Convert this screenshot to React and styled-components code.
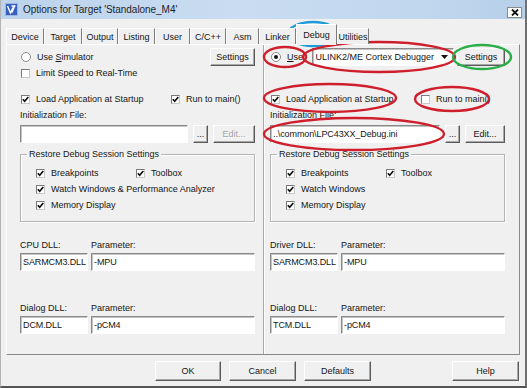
import React from 'react';
import styled, { createGlobalStyle } from 'styled-components';

const GlobalStyle = createGlobalStyle`
  html, body { margin:0; padding:0; background:#fff; }
  body { font-family:"Liberation Sans", Arial, sans-serif; font-size:9px; color:#151515; }
  * { box-sizing:border-box; }
`;

const Window = styled.div`
position:relative;
width:527px;
height:388px;
background:#f0f0f0;
border-left:1px solid #b4b4b4;
border-right:2px solid #707070;
border-bottom:2px solid #555;
display:flex;
flex-direction:column;
overflow:hidden;
`;

const TitleBar = styled.div`
height:19px;
flex:none;
display:flex;
align-items:center;
padding:0 3px 0 4px;
background:linear-gradient(to right,#bcd3ec,#c9dcf1 45%,#c1d7ee 80%,#b7cfe9);
`;

const TitleText = styled.span`
margin-left:5px;
font-size:10px;
letter-spacing:-0.05px;
color:#1b1f2a;
`;

const CloseBox = styled.div`
margin-left:auto;
margin-top:5px;
width:15px;
height:11px;
background:#fff;
border:1px solid #8a8a8a;
display:flex;
align-items:center;
justify-content:center;
`;

const TabStrip = styled.div`
display:flex;
align-items:flex-end;
height:20px;
margin-top:5px;
padding-left:5px;
position:relative;
z-index:1;
`;

const Tab = styled.div`
width:${p => p.$w}px;
height:${p => (p.$active ? 21 : 16)}px;
margin-bottom:${p => (p.$active ? -1 : 0)}px;
display:flex;
align-items:center;
justify-content:center;
white-space:nowrap;
background:#f0f0f0;
border-top:1px solid #fff;
border-left:1px solid #fff;
border-right:1px solid #7c7c7c;
`;

const Panel = styled.div`
margin:0 5px;
height:311px;
flex:none;
border:1px solid;
border-color:#fff #8a8a8a #8a8a8a #fff;
display:grid;
grid-template-columns:256px 2px 1fr;
`;

const Divider = styled.div`
border-left:1px solid #a8a8a8;
border-right:1px solid #fff;
`;

const Column = styled.div`
display:flex;
flex-direction:column;
padding:2px ${p => (p.$right ? 14 : 8)}px 0 ${p => (p.$right ? 5 : 13)}px;
`;

const Row = styled.div`
display:flex;
align-items:center;
height:${p => p.$h || 14}px;
margin-top:${p => p.$mt || 0}px;
gap:${p => p.$gap || 0}px;
white-space:nowrap;
`;

const SplitRow = styled.div`
display:grid;
grid-template-columns:${p => p.$first}px 1fr;
align-items:center;
height:${p => p.$h || 14}px;
margin-top:${p => p.$mt || 0}px;
column-gap:${p => p.$gap || 0}px;
white-space:nowrap;
`;

const Option = styled.label`
display:flex;
align-items:center;
gap:6px;
margin-left:1px;
`;

const Box = styled.span`
width:9px;
height:9px;
flex:none;
background:#fff;
border:1px solid;
border-color:#7a7a7a #c8c8c8 #c8c8c8 #7a7a7a;
display:flex;
align-items:center;
justify-content:center;
`;

const Dot = styled.span`
width:10px;
height:10px;
flex:none;
border-radius:50%;
background:#fff;
border:1px solid #8a8a8a;
display:flex;
align-items:center;
justify-content:center;
&::after {
  content:'';
  width:4px;
  height:4px;
  border-radius:50%;
  background:${p => (p.$on ? '#111' : 'transparent')};
}
`;

const Key = styled.span`
text-decoration:underline;
`;

const Button = styled.button`
font-family:"Liberation Sans", Arial, sans-serif;
font-size:9px;
color:${p => (p.disabled ? '#a2a2a2' : '#151515')};
text-shadow:${p => (p.disabled ? '1px 1px 0 #fff' : 'none')};
width:${p => p.$w}px;
height:${p => p.$h || 18}px;
flex:none;
margin-left:${p => (p.$push ? 'auto' : '0')};
padding:0;
background:#f0f0f0;
border:1px solid;
border-color:#fff #5a5a5a #5a5a5a #fff;
box-shadow:inset -1px -1px 0 #a8a8a8;
`;

const Field = styled.input`
font-family:"Liberation Sans", Arial, sans-serif;
font-size:9px;
letter-spacing:-0.1px;
color:#151515;
height:18px;
width:100%;
min-width:0;
flex:1;
padding:0 0 0 2px;
background:#fff;
border:1px solid;
border-color:#8a8a8a #fff #fff #8a8a8a;
box-shadow:inset 1px 1px 0 #c4c4c4;
outline:none;
`;

const Combo = styled.div`
width:142px;
height:18px;
flex:none;
margin-left:6px;
display:flex;
align-items:center;
padding:0 2px 0 3px;
background:#fff;
border:1px solid;
border-color:#8a8a8a #fff #fff #8a8a8a;
box-shadow:inset 1px 1px 0 #c4c4c4;
`;

const ComboArrow = styled.svg`
margin-left:auto;
margin-right:3px;
`;

const Group = styled.fieldset`
margin:6px 0 0 0;
padding:7px 0 9px 0;
border:1px solid #b4b4b4;
box-shadow:inset 1px 1px 0 #fff, 1px 1px 0 #fff;
`;

const GroupBody = styled.div`
display:flex;
flex-direction:column;
gap:2px;
padding-left:14px;
`;

const Legend = styled.legend`
margin-left:6px;
padding:0 2px;
line-height:10px;
`;

const Footer = styled.div`
display:flex;
align-items:flex-start;
gap:8px;
padding:6px 6px 0 154px;
`;

const Annotations = styled.svg`
position:absolute;
top:0;
left:-1px;
pointer-events:none;
`;

const tabs = [
  ['Device', 38], ['Target', 38], ['Output', 36], ['Listing', 37], ['User', 35],
  ['C/C++', 36], ['Asm', 33], ['Linker', 37], ['Debug', 41, true], ['Utilities', 32],
];

function Tick() {
  return (
    <svg width="7" height="7" viewBox="0 0 7 7">
      <path d="M0.8 3.2 L2.7 5.3 L6.3 1" fill="none" stroke="#111" strokeWidth="1.7" />
    </svg>
  );
}

function Check({ on, children }) {
  return (
    <Option>
      <Box>{on && <Tick />}</Box>
      <span>{children}</span>
    </Option>
  );
}

function Radio({ on, children }) {
  return (
    <Option>
      <Dot $on={on} />
      <span>{children}</span>
    </Option>
  );
}

function Side({ right }) {
  const d = right
    ? { init: '..\\common\\LPC43XX_Debug.ini', run: false, watch: 'Watch Windows', dll: 'Driver DLL:', dllFile: 'SARMCM3.DLL', dlg: 'TCM.DLL' }
    : { init: '', run: true, watch: 'Watch Windows & Performance Analyzer', dll: 'CPU DLL:', dllFile: 'SARMCM3.DLL', dlg: 'DCM.DLL' };
  return (
    <Column $right={right}>
      <Row $h={19}>
        {right ? (
          <>
            <Radio on><Key>U</Key>se:</Radio>
            <Combo>
              ULINK2/ME Cortex Debugger
              <ComboArrow width="7" height="4" viewBox="0 0 7 4"><path d="M0 0 H7 L3.5 4 Z" fill="#111" /></ComboArrow>
            </Combo>
            <Button $w={48} $push>Settings</Button>
          </>
        ) : (
          <>
            <Radio>Use <Key>S</Key>imulator</Radio>
            <Button $w={45} $push>Settings</Button>
          </>
        )}
      </Row>
      <Row>{!right && <Check>Limit Speed to Real-Time</Check>}</Row>
      <SplitRow $first={150} $mt={12}>
        <Check on>Load Application at Startup</Check>
        <Check on={d.run}>Run to main()</Check>
      </SplitRow>
      <Row $mt={2}>Initialization File:</Row>
      <Row $h={18} $mt={3} $gap={5}>
        <Field readOnly value={d.init} />
        <Button $w={15}>...</Button>
        <Button $w={right ? 40 : 42} disabled={!right}>Edit...</Button>
      </Row>
      <Group>
        <Legend>Restore Debug Session Settings</Legend>
        <GroupBody>
          <SplitRow $first={100}>
            <Check on>Breakpoints</Check>
            <Check on>Toolbox</Check>
          </SplitRow>
          <Row><Check on>{d.watch}</Check></Row>
          <Row><Check on>Memory Display</Check></Row>
        </GroupBody>
      </Group>
      <SplitRow $first={68} $gap={3} $mt={16}>
        <span>{d.dll}</span>
        <span>Parameter:</span>
      </SplitRow>
      <SplitRow $first={68} $gap={3} $h={18} $mt={1}>
        <Field readOnly value={d.dllFile} />
        <Field readOnly value="-MPU" />
      </SplitRow>
      <SplitRow $first={68} $gap={3} $mt={30}>
        <span>Dialog DLL:</span>
        <span>Parameter:</span>
      </SplitRow>
      <SplitRow $first={68} $gap={3} $h={18} $mt={1}>
        <Field readOnly value={d.dlg} />
        <Field readOnly value="-pCM4" />
      </SplitRow>
    </Column>
  );
}

export default function App() {
  return (
    <>
      <GlobalStyle />
      <Window>
        <TitleBar>
          <svg width="13" height="13" viewBox="0 0 13 13">
            <rect x="0.5" y="0.5" width="12" height="12" fill="#3560bf" stroke="#9fb6e3" />
            <path d="M2.5 3 L5.5 10 L8 4.5 M6.5 3 H10.5 M9.5 3 L7 9.5" fill="none" stroke="#fff" strokeWidth="1.4" />
          </svg>
          <TitleText>Options for Target 'Standalone_M4'</TitleText>
          <CloseBox>
            <svg width="8" height="7" viewBox="0 0 8 7">
              <path d="M1 0.5 L7 6.5 M7 0.5 L1 6.5" stroke="#111" strokeWidth="1.8" />
            </svg>
          </CloseBox>
        </TitleBar>
        <TabStrip>
          {tabs.map(([name, w, active]) => (
            <Tab key={name} $w={w} $active={active}>{name}</Tab>
          ))}
        </TabStrip>
        <Panel>
          <Side />
          <Divider />
          <Side right />
        </Panel>
        <Footer>
          <Button $w={66} $h={20}>OK</Button>
          <Button $w={67} $h={20}>Cancel</Button>
          <Button $w={67} $h={20}>Defaults</Button>
          <Button $w={67} $h={20} $push>Help</Button>
        </Footer>
        <Annotations width="527" height="388" viewBox="0 0 527 388" fill="none" strokeWidth="2.4">
          <ellipse cx="313" cy="34" rx="25" ry="12" stroke="#1d9ad8" />
          <ellipse cx="285" cy="57" rx="21" ry="10" stroke="#cf1f2c" />
          <ellipse cx="379" cy="57" rx="76" ry="15" stroke="#cf1f2c" />
          <ellipse cx="482" cy="57" rx="29" ry="12" stroke="#2aae48" />
          <ellipse cx="330" cy="98" rx="66" ry="14" stroke="#cf1f2c" />
          <ellipse cx="452" cy="99" rx="37" ry="12" stroke="#cf1f2c" />
          <ellipse cx="354" cy="134" rx="90" ry="16" stroke="#cf1f2c" />
        </Annotations>
      </Window>
    </>
  );
}
